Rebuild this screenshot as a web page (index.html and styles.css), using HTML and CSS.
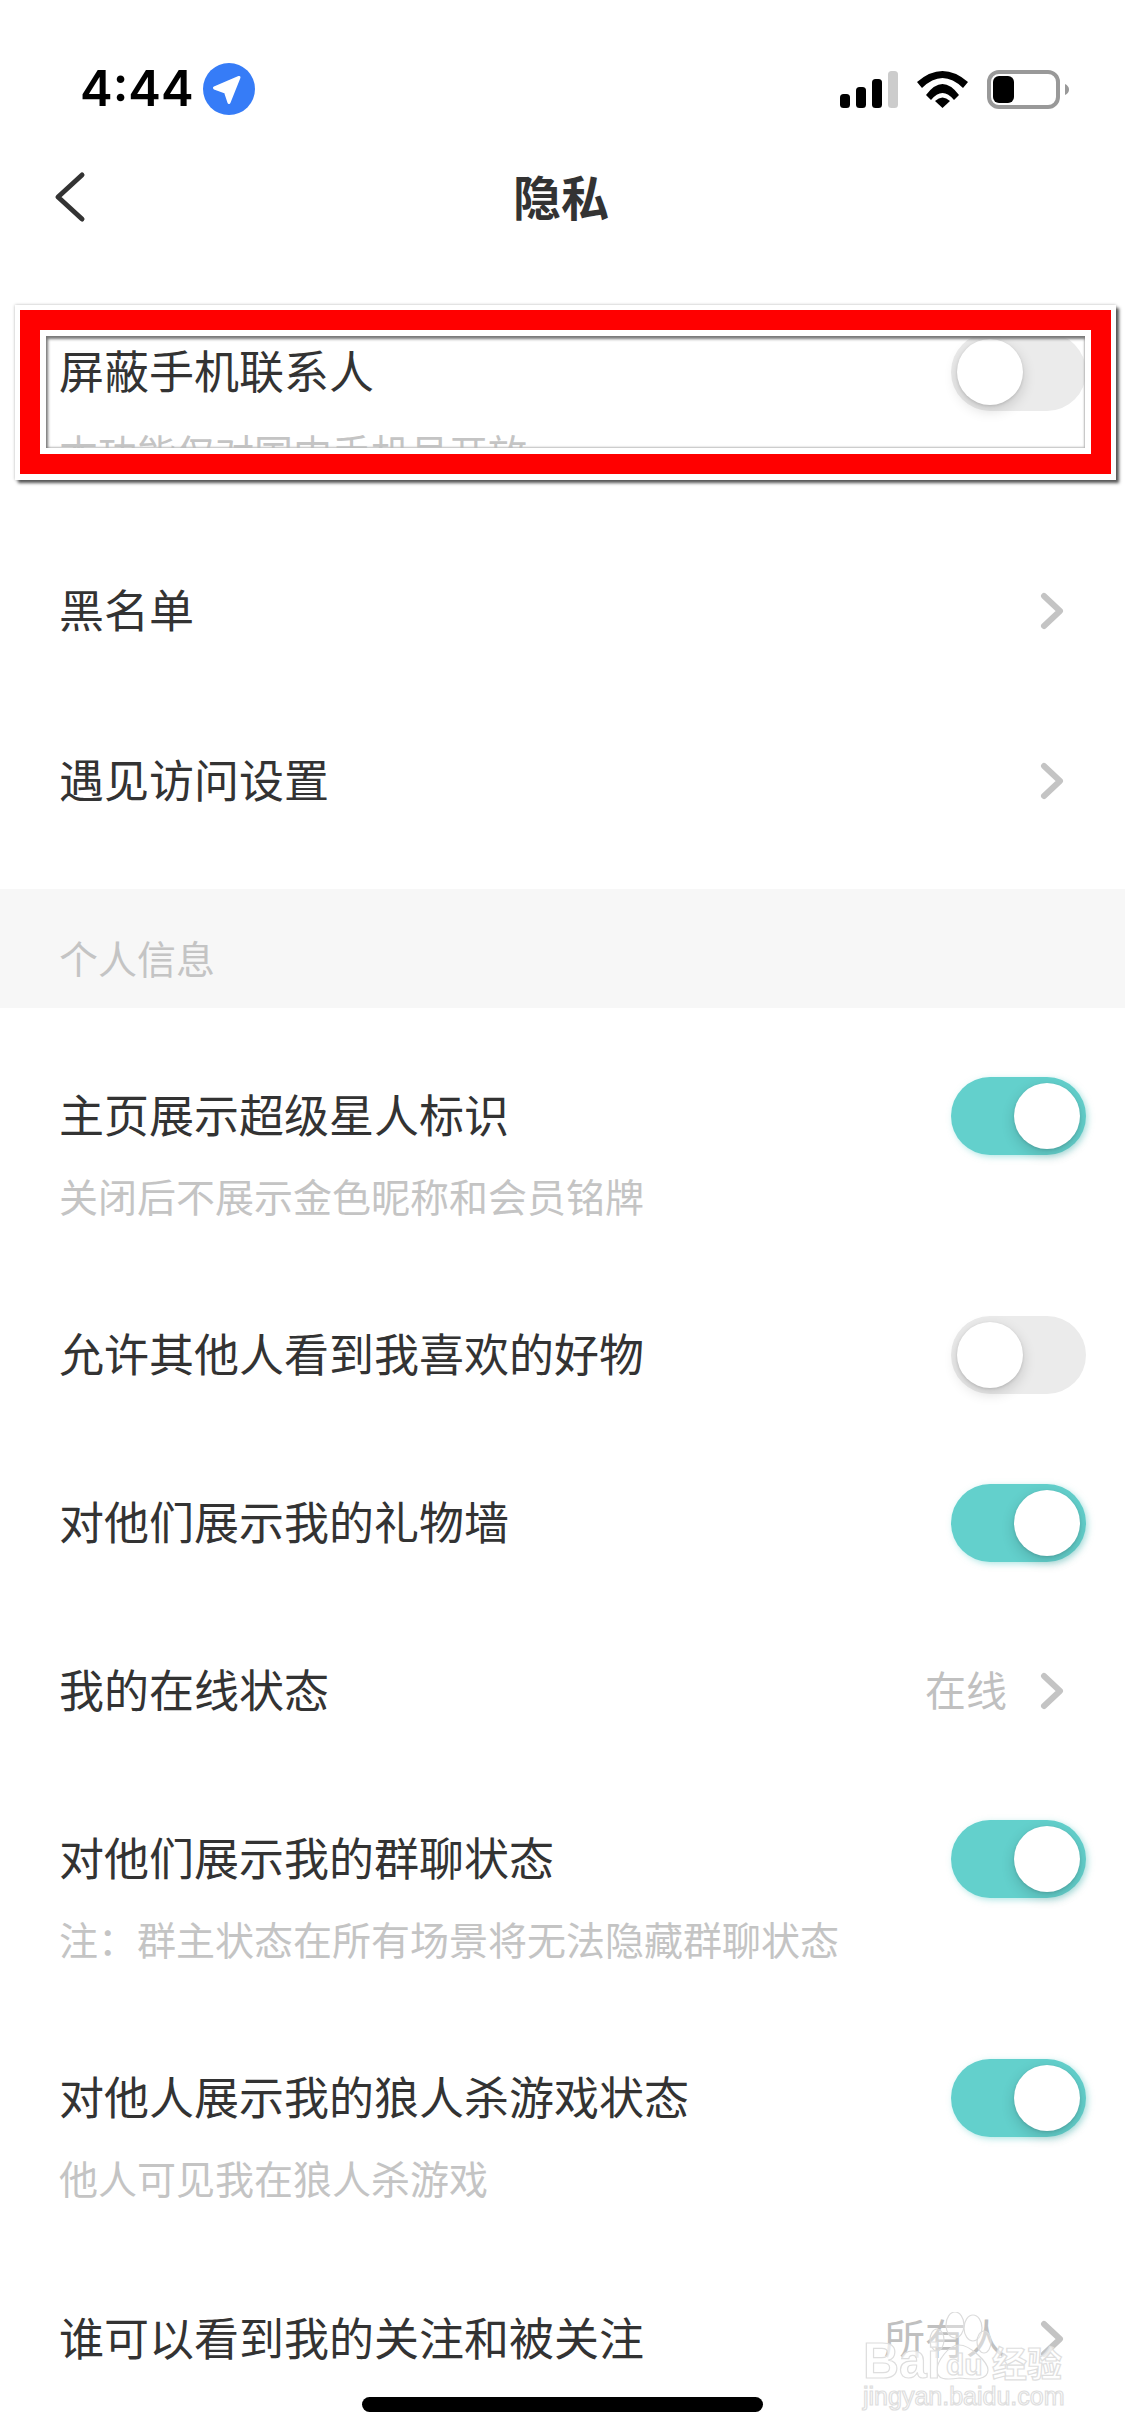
FILE: index.html
```html
<!DOCTYPE html>
<html lang="zh-CN">
<head>
    <meta charset="UTF-8">
    <meta name="viewport" content="width=device-width, initial-scale=1.0">
    <title>隐私</title>
    <link rel="stylesheet" href="styles.css">
</head>
<body>
    <div class="status-bar">
        <div class="status-left">
            <span class="time">4:44</span>
            <svg class="location" width="52" height="52" viewBox="0 0 52 52">
                <circle cx="26" cy="26" r="26" fill="#367cf7"/>
                <path d="M36 14.5 L11.5 25 L22.5 29 L26 39.5 Z" fill="#fff" stroke="#fff" stroke-width="3" stroke-linejoin="round"/>
            </svg>
        </div>
        <div class="status-right">
            <svg width="58" height="37" viewBox="0 0 58 37">
                <rect x="0" y="23" width="10" height="14" rx="3.5" fill="#000"/>
                <rect x="16" y="16" width="10" height="21" rx="3.5" fill="#000"/>
                <rect x="32" y="8" width="10" height="29" rx="3.5" fill="#000"/>
                <rect x="48" y="0" width="10" height="37" rx="3.5" fill="#ccc"/>
            </svg>
            <svg width="51" height="37" viewBox="0 0 51 37">
                <path d="M0 11 Q25.5 -11 51 11 L46 17 Q25.5 -3 5 17 Z" fill="#000"/>
                <path d="M9 24 Q25.5 2 42 24 L37 29 Q25.5 15 14 29 Z" fill="#000"/>
                <path d="M18 30 Q25.5 23 33 30 L25.5 37 Z" fill="#000"/>
            </svg>
            <svg width="82" height="39" viewBox="0 0 82 39">
                <rect x="2" y="2" width="69" height="35" rx="10" fill="none" stroke="#999" stroke-width="4"/>
                <rect x="6" y="6" width="21" height="27" rx="6" fill="#000"/>
                <path d="M78 14 Q82 16 82 19.5 Q82 23 78 25 Z" fill="#999"/>
            </svg>
        </div>
    </div>

    <nav class="nav-bar">
        <svg class="back" width="34" height="52" viewBox="0 0 34 52">
            <path d="M28 4 L4 26 L28 48" fill="none" stroke="#333" stroke-width="5" stroke-linecap="round" stroke-linejoin="round"/>
        </svg>
        <h1 class="nav-title">隐私</h1>
        <span></span>
    </nav>

    <div class="mark-frame">
        <div class="mark-red">
            <div class="mark-white">
                <div class="mark-view">
                    <div class="mark-row">
                        <div class="row-main">
                            <span class="row-title">屏蔽手机联系人</span>
                            <div class="switch"><span class="knob"></span></div>
                        </div>
                        <p class="row-sub">本功能仅对国内手机号开放</p>
                    </div>
                </div>
            </div>
        </div>
    </div>

    <section class="group-top">
        <div class="row">
            <div class="row-main">
                <span class="row-title">黑名单</span>
                <div class="row-right">
                    <svg class="chevron" width="24" height="38" viewBox="0 0 24 38"><path d="M4 4 L20 19 L4 34" fill="none" stroke="#c4c4c4" stroke-width="6" stroke-linecap="round" stroke-linejoin="round"/></svg>
                </div>
            </div>
        </div>
        <div class="row">
            <div class="row-main">
                <span class="row-title">遇见访问设置</span>
                <div class="row-right">
                    <svg class="chevron" width="24" height="38" viewBox="0 0 24 38"><path d="M4 4 L20 19 L4 34" fill="none" stroke="#c4c4c4" stroke-width="6" stroke-linecap="round" stroke-linejoin="round"/></svg>
                </div>
            </div>
        </div>
    </section>

    <div class="band">个人信息</div>

    <section class="group-info">
        <div class="row has-sub">
            <div class="row-main">
                <span class="row-title">主页展示超级星人标识</span>
                <div class="switch on"><span class="knob"></span></div>
            </div>
            <p class="row-sub">关闭后不展示金色昵称和会员铭牌</p>
        </div>
        <div class="row">
            <div class="row-main">
                <span class="row-title">允许其他人看到我喜欢的好物</span>
                <div class="switch"><span class="knob"></span></div>
            </div>
        </div>
        <div class="row">
            <div class="row-main">
                <span class="row-title">对他们展示我的礼物墙</span>
                <div class="switch on"><span class="knob"></span></div>
            </div>
        </div>
        <div class="row">
            <div class="row-main">
                <span class="row-title">我的在线状态</span>
                <div class="row-right">
                    <span class="row-value">在线</span>
                    <svg class="chevron" width="24" height="38" viewBox="0 0 24 38"><path d="M4 4 L20 19 L4 34" fill="none" stroke="#c4c4c4" stroke-width="6" stroke-linecap="round" stroke-linejoin="round"/></svg>
                </div>
            </div>
        </div>
        <div class="row has-sub">
            <div class="row-main">
                <span class="row-title">对他们展示我的群聊状态</span>
                <div class="switch on"><span class="knob"></span></div>
            </div>
            <p class="row-sub">注：群主状态在所有场景将无法隐藏群聊状态</p>
        </div>
        <div class="row has-sub">
            <div class="row-main">
                <span class="row-title">对他人展示我的狼人杀游戏状态</span>
                <div class="switch on"><span class="knob"></span></div>
            </div>
            <p class="row-sub">他人可见我在狼人杀游戏</p>
        </div>
        <div class="row">
            <div class="row-main">
                <span class="row-title">谁可以看到我的关注和被关注</span>
                <div class="row-right">
                    <span class="row-value">所有人</span>
                    <svg class="chevron" width="24" height="38" viewBox="0 0 24 38"><path d="M4 4 L20 19 L4 34" fill="none" stroke="#c4c4c4" stroke-width="6" stroke-linecap="round" stroke-linejoin="round"/></svg>
                </div>
            </div>
        </div>
    </section>

    <div class="home-bar"></div>

    <!-- watermark sits over the last row -->
    <svg class="watermark" width="210" height="110" viewBox="0 0 210 110">
        <g class="wm-shape">
            <ellipse cx="95" cy="13" rx="9" ry="13"/>
            <ellipse cx="113" cy="16" rx="9" ry="13"/>
            <ellipse cx="77" cy="28" rx="7" ry="11"/>
            <ellipse cx="124" cy="30" rx="7" ry="11"/>
            <path d="M99 33 C110 33 128 50 128 58 C128 68 115 68 100 66 C86 68 77 68 77 58 C77 50 88 33 99 33 Z"/>
        </g>
        <text class="wm-text wm-big" x="3" y="66">Bai</text>
        <text class="wm-text wm-du" x="86" y="63">du</text>
        <text class="wm-text wm-cn" x="132" y="65">经验</text>
        <text class="wm-text wm-url" x="3" y="93">jingyan.baidu.com</text>
    </svg>
</body>
</html>
```

FILE: styles.css
```css
* {
    box-sizing: border-box;
}

body {
    position: relative;
    width: 1125px;
    height: 2436px;
    margin: 0;
    overflow: hidden;
    background-color: #fff;
    color: #333;
    font-family: "Noto Sans CJK SC", "Noto Sans", sans-serif;
}

.status-bar {
    height: 178px;
    padding: 0 56px 0 80px;
    display: flex;
    justify-content: space-between;
    align-items: center;
}

.status-left {
    display: flex;
    align-items: center;
    gap: 9px;
}

.time {
    font-family: "Inter", "Liberation Sans", sans-serif;
    font-size: 49px;
    font-weight: 600;
    line-height: 52px;
    color: #000;
}

.status-right {
    display: flex;
    align-items: center;
    gap: 19px;
}

.status-right svg,
.location {
    display: block;
}

.nav-bar {
    height: 40px;
    padding-left: 54px;
    padding-right: 57px;
    display: grid;
    grid-template-columns: 1fr auto 1fr;
    grid-template-rows: 40px;
    align-items: center;
}

.back {
    display: block;
    margin-top: -7px;
    margin-bottom: -5px;
}

.nav-title {
    margin: 0 0 6px;
    font-size: 48px;
    font-weight: 700;
    line-height: 40px;
    color: #333;
}

.mark-frame {
    margin: 87px 9px 0 15px;
    padding: 5px 5px 6px;
    background-color: #fff;
    box-shadow: 3px 3px 3px #555, 0 0 3px #bbb;
}

.mark-red {
    padding: 20px;
    background-color: #f00;
}

.mark-white {
    padding: 6px;
    background-color: #fff;
}

.mark-view {
    height: 112px;
    padding-left: 13px;
    overflow: hidden;
    position: relative;
}

.mark-view::after {
    content: "";
    position: absolute;
    inset: 0;
    box-shadow: inset 2px 3px 3px #777, inset -1px -1px 2px #bbb;
}

.mark-row {
    margin-top: -3px;
    margin-right: -1px;
}

.group-top {
    margin-top: 47px;
}

.group-top .row + .row {
    padding-top: 47px;
    padding-bottom: 43px;
}

.row {
    padding: 45px 39px 45px 59px;
}

.row.has-sub {
    padding-bottom: 50px;
}

.group-info .row:last-child {
    padding-top: 47px;
}

.row-main {
    height: 78px;
    display: flex;
    justify-content: space-between;
    align-items: center;
}

.row-title {
    font-size: 45px;
    line-height: 78px;
    color: #333;
    margin-bottom: 5px;
}

.row-sub {
    margin: 17px 0 3px;
    font-size: 39px;
    line-height: 46px;
    color: #c4c4c4;
}

.row-right {
    display: flex;
    align-items: center;
    gap: 33px;
    margin-right: 22px;
}

.row-value {
    font-size: 41px;
    line-height: 46px;
    color: #c0c0c0;
    margin-bottom: 6px;
}

.chevron {
    display: block;
}

.band {
    height: 119px;
    margin-top: 26px;
    padding: 45px 0 25px 59px;
    background-color: #f7f7f7;
    font-size: 39px;
    line-height: 46px;
    color: #c4c4c4;
}

.group-info {
    padding-top: 24px;
}

.switch {
    width: 135px;
    height: 78px;
    padding: 6px;
    flex-shrink: 0;
    display: flex;
    justify-content: flex-start;
    border-radius: 39px;
    background-color: #ebebeb;
}

.switch.on {
    justify-content: flex-end;
    background-color: #63d0cc;
    box-shadow: 2px 2px 6px rgba(99, 208, 204, 0.5);
}

.knob {
    width: 66px;
    height: 66px;
    border-radius: 50%;
    background-color: #fff;
    box-shadow: 0 5px 14px rgba(0, 0, 0, 0.16), 0 1px 3px rgba(0, 0, 0, 0.12);
}

.home-bar {
    position: absolute;
    left: 362px;
    top: 2397px;
    width: 401px;
    height: 15px;
    border-radius: 8px;
    background-color: #000;
}

.watermark {
    position: absolute;
    left: 860px;
    top: 2312px;
}

.wm-shape {
    fill: rgba(255, 255, 255, 0.35);
    stroke: #dcdcdc;
    stroke-width: 1.2;
}

.wm-text {
    fill: rgba(255, 255, 255, 0.7);
    stroke: #dedede;
    stroke-width: 1.2;
}

.wm-big {
    font-family: "Liberation Sans", sans-serif;
    font-size: 50px;
    font-weight: 700;
}

.wm-du {
    font-family: "Liberation Sans", sans-serif;
    font-size: 30px;
    font-weight: 700;
}

.wm-cn {
    font-family: "Noto Sans CJK SC", sans-serif;
    font-size: 35px;
    font-weight: 700;
}

.wm-url {
    font-family: "Liberation Sans", sans-serif;
    font-size: 25px;
}
```
